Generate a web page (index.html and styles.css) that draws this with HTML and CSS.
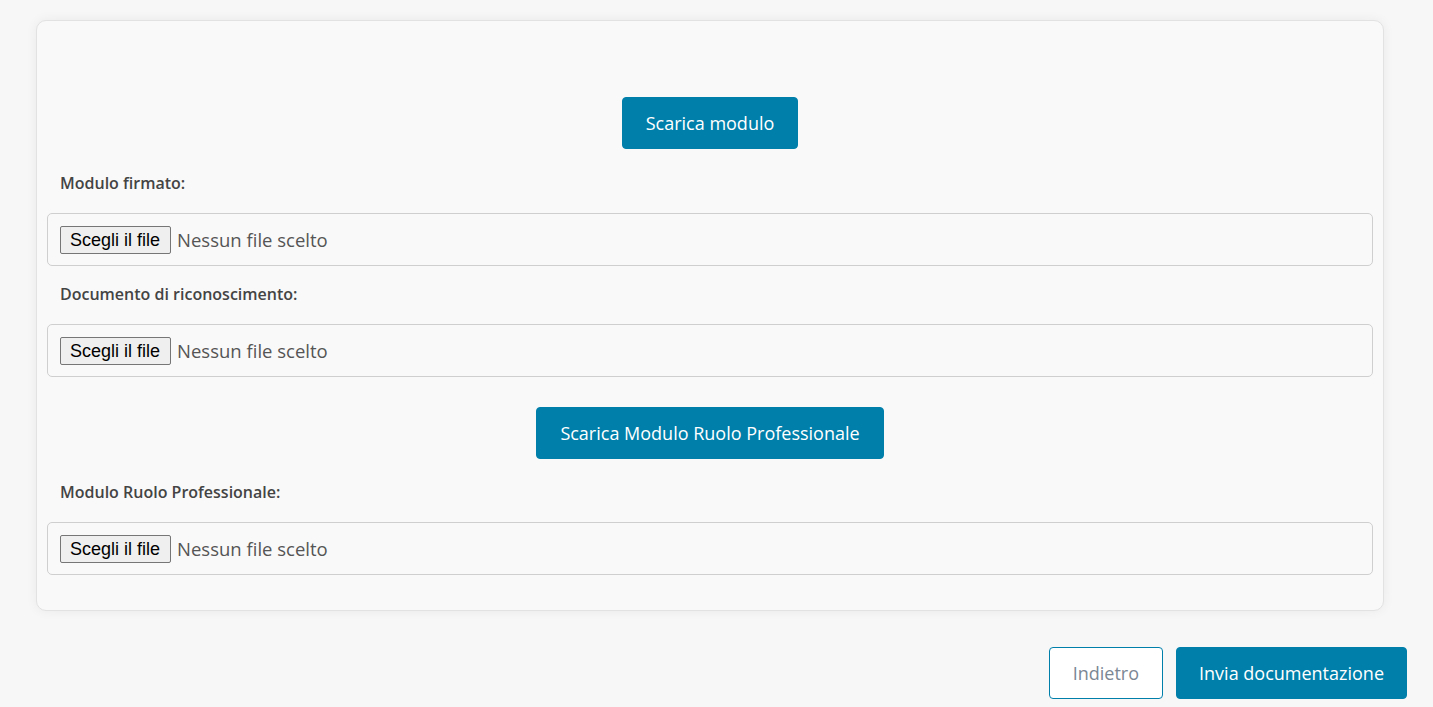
FILE: index.html
```html
<!DOCTYPE html>
<html lang="it">
<head>
    <meta charset="UTF-8">
    <meta name="viewport" content="width=device-width, initial-scale=1.0">
    <title>Invio documentazione</title>
    <link rel="stylesheet" href="styles.css">
</head>
<body>

    <div class="doc-card">
        <div class="center-row first">
            <button type="button" class="btn-primary">Scarica modulo</button>
        </div>

        <label class="field-label">Modulo firmato:</label>
        <div class="file-box">
            <span class="file-btn">Scegli il file</span>
            <span class="file-name">Nessun file scelto</span>
        </div>

        <label class="field-label second">Documento di riconoscimento:</label>
        <div class="file-box">
            <span class="file-btn">Scegli il file</span>
            <span class="file-name">Nessun file scelto</span>
        </div>

        <div class="center-row mid">
            <button type="button" class="btn-primary">Scarica Modulo Ruolo Professionale</button>
        </div>

        <label class="field-label third">Modulo Ruolo Professionale:</label>
        <div class="file-box">
            <span class="file-btn">Scegli il file</span>
            <span class="file-name">Nessun file scelto</span>
        </div>
    </div>

    <div class="actions">
        <button type="button" class="btn-outline">Indietro</button>
        <button type="button" class="btn-primary send">Invia documentazione</button>
    </div>

</body>
</html>
```

FILE: styles.css
```css
body {
    font-family: "Open Sans", Arial, sans-serif;
    margin: 0;
    background-color: #f7f7f7;
    color: #444;
}

.doc-card {
    background-color: #f9f9f9;
    border: 1px solid #e2e2e2;
    border-radius: 10px;
    box-shadow: 0 0 12px rgba(0, 0, 0, 0.06);
    margin: 20px 49px 0 36px;
    padding: 76px 10px 35px 10px;
}

.center-row {
    text-align: center;
}

.center-row.mid {
    margin-top: 30px;
}

.btn-primary {
    background-color: #007fab;
    color: #fff;
    border: 1px solid #007fab;
    border-radius: 4px;
    font-family: "Open Sans", Arial, sans-serif;
    font-size: 18px;
    height: 52px;
    padding: 0 23px;
    cursor: pointer;
}

.btn-primary.send {
    padding: 0 22px;
}

.field-label {
    display: block;
    font-weight: 600;
    font-size: 16px;
    line-height: 24px;
    color: #444;
    padding-left: 13px;
    margin: 22px 0 18px;
}

.field-label.second {
    margin-top: 16px;
}

.field-label.third {
    margin-top: 21px;
}

.file-box {
    display: flex;
    align-items: center;
    height: 51px;
    padding: 0 12px;
    border: 1px solid #cfcfcf;
    border-radius: 5px;
    background-color: #f9f9f9;
}

.file-btn {
    font-family: "Liberation Sans", Arial, sans-serif;
    font-size: 18px;
    color: #000;
    background-color: #efefef;
    border: 1px solid #767676;
    border-radius: 2px;
    height: 26px;
    line-height: 26px;
    padding: 0 10px 0 9px;
}

.file-name {
    font-size: 18.5px;
    color: #555;
    margin-left: 6px;
}

.actions {
    display: flex;
    justify-content: flex-end;
    gap: 13px;
    margin: 36px 26px 0 0;
}

.btn-outline {
    background-color: #fff;
    color: #7b8794;
    border: 1px solid #007fab;
    border-radius: 4px;
    font-family: "Open Sans", Arial, sans-serif;
    font-size: 18px;
    height: 52px;
    padding: 0 23px;
    cursor: pointer;
}
```
